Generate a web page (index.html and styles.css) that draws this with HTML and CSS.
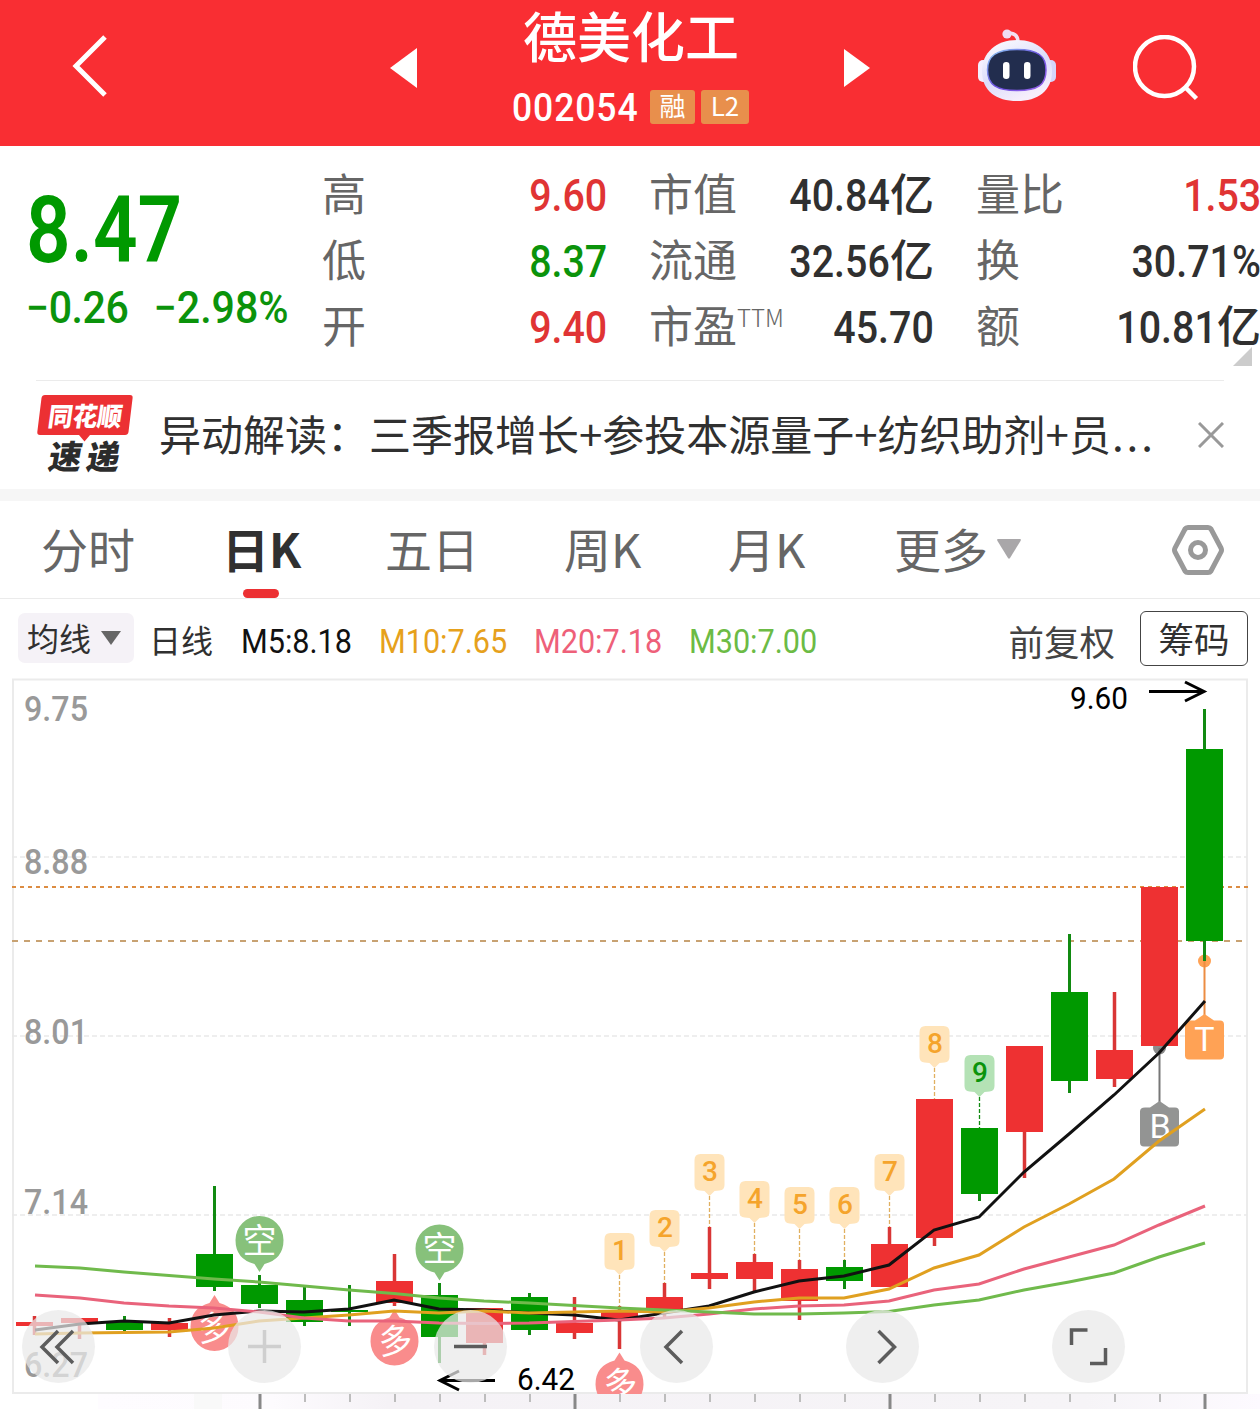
FILE: index.html
```html
<!DOCTYPE html>
<html lang="zh-CN">

<head>
    <meta charset="UTF-8">
    <meta name="viewport" content="width=device-width, initial-scale=1.0">
    <title>德美化工 002054</title>
    <link rel="stylesheet" href="styles.css">
</head>

<body>
    <header class="header">
        <svg class="back" width="36" height="64" viewBox="0 0 36 64">
            <path d="M33 4 L4 33 L33 62" />
        </svg>
        <svg class="prev" width="28" height="42" viewBox="0 0 28 42">
            <path d="M0 21 L27 1 V41 Z" />
        </svg>
        <div class="title">
            <h1>德美化工</h1>
            <div class="code-row">
                <span class="code">002054</span>
                <span class="badge">融</span>
                <span class="badge">L2</span>
            </div>
        </div>
        <svg class="next" width="26" height="40" viewBox="0 0 26 40">
            <path d="M0 1 L26 20 L0 39 Z" />
        </svg>
        <svg class="robot" width="78" height="74" viewBox="978 28 78 74">
            <defs>
                <linearGradient id="shell" x1="0" y1="0" x2="0.5" y2="1">
                    <stop offset="0" stop-color="#ffffff" />
                    <stop offset="0.6" stop-color="#dcdcfb" />
                    <stop offset="1" stop-color="#f6eefc" />
                </linearGradient>
                <linearGradient id="ring" x1="0" y1="0" x2="1" y2="1">
                    <stop offset="0" stop-color="#8fd0f5" />
                    <stop offset="0.5" stop-color="#6a50e0" />
                    <stop offset="1" stop-color="#9a63ea" />
                </linearGradient>
            </defs>
            <path d="M1008 33 Q1018 33 1018 42" fill="none" stroke="#f3dff0" stroke-width="3.5" />
            <circle cx="1007" cy="34" r="4.6" fill="#f0dcf3" />
            <rect x="978" y="60" width="12" height="22" rx="5" fill="#f3efff" />
            <rect x="1044" y="60" width="12" height="22" rx="5" fill="#d5d4fa" />
            <path d="M1017 40 C1038 40 1052 53 1052 71 C1052 91 1038 101 1017 101 C996 101 982 91 982 71 C982 53 996 40 1017 40 Z" fill="url(#shell)" />
            <path d="M1017 49.500 C1038 49.500 1046 56 1046 70 C1046 85 1038 90.500 1017 90.500 C997 90.500 987.500 85 987.500 70 C987.500 56 996 49.500 1017 49.500 Z" fill="#222d4e" stroke="url(#ring)" stroke-width="1.500" />
            <rect x="1003" y="62" width="6.500" height="17" rx="3.200" fill="#fff" />
            <rect x="1024" y="62" width="6.500" height="17" rx="3.200" fill="#fff" />
        </svg>
        <svg class="search" width="66" height="66" viewBox="0 0 66 66">
            <circle cx="31.500" cy="31.500" r="29.500" />
            <path d="M52 52 L63.500 63.500" />
        </svg>
    </header>

    <section class="quote">
        <div class="price">
            <div class="last num">8.47</div>
            <div class="change">
                <span class="num">−0.26</span>
                <span class="num">−2.98%</span>
            </div>
        </div>
        <dl class="metrics">
            <div><dt>高</dt><dd class="num red">9.60</dd></div>
            <div><dt>低</dt><dd class="num green">8.37</dd></div>
            <div><dt>开</dt><dd class="num red">9.40</dd></div>
        </dl>
        <dl class="metrics">
            <div><dt>市值</dt><dd><span class="num">40.84</span>亿</dd></div>
            <div><dt>流通</dt><dd><span class="num">32.56</span>亿</dd></div>
            <div><dt>市盈<sup>TTM</sup></dt><dd class="num">45.70</dd></div>
        </dl>
        <dl class="metrics">
            <div><dt>量比</dt><dd class="num red">1.53</dd></div>
            <div><dt>换</dt><dd class="num">30.71%</dd></div>
            <div><dt>额</dt><dd><span class="num">10.81</span>亿</dd></div>
        </dl>
        <i class="corner"></i>
    </section>

    <section class="news">
        <svg class="news-logo" width="98" height="82" viewBox="36 393 98 82">
            <path d="M45 395 H130 Q133 395 132.600 398 L128.500 432 Q128 435 125 435 H90 L84.500 441.500 L79 435 H40 Q37 435 37.300 432 L41.500 398 Q42 395 45 395 Z" fill="#ec3033" />
            <text class="logo-top" transform="translate(47 426) skewX(-8)" textLength="74" lengthAdjust="spacingAndGlyphs">同花顺</text>
            <text class="logo-bottom" transform="translate(47 469) skewX(-10)" textLength="71">速递</text>
        </svg>
        <p>异动解读：三季报增长+参投本源量子+纺织助剂+员<span class="dots">...</span></p>
        <svg class="close" width="26" height="26" viewBox="0 0 26 26">
            <path d="M1 1 L25 25 M25 1 L1 25" />
        </svg>
    </section>

    <nav class="tabs">
        <a>分时</a>
        <a class="active">日K</a>
        <a>五日</a>
        <a>周K</a>
        <a>月K</a>
        <a>更多</a>
        <svg class="more" width="24" height="20" viewBox="0 0 24 20">
            <path d="M1 0 H23 Q24.500 0 23.500 2 L13 19 Q12 20.500 11 19 L0.500 2 Q-0.500 0 1 0 Z" />
        </svg>
        <svg class="setting" width="52" height="50" viewBox="0 0 52 50">
            <path d="M16 2.500 H36 Q38 2.500 39 4 L49 23 Q50 25 49 27 L39 46 Q38 47.500 36 47.500 H16 Q14 47.500 13 46 L3 27 Q2 25 3 23 L13 4 Q14 2.500 16 2.500 Z" />
            <circle cx="26" cy="25" r="7.500" />
        </svg>
    </nav>

    <div class="legend">
        <button class="ma-btn">均线
            <svg width="20" height="14" viewBox="0 0 20 14"><path d="M0 0 H20 L10 14 Z" /></svg>
        </button>
        <span class="period">日线</span>
        <span class="ma m5">M5:8.18</span>
        <span class="ma m10">M10:7.65</span>
        <span class="ma m20">M20:7.18</span>
        <span class="ma m30">M30:7.00</span>
        <span class="adjust">前复权</span>
        <button class="chips">筹码</button>
    </div>

    <svg class="chart" width="1260" height="737" viewBox="0 672 1260 737">
        <defs>
            <path id="tag" d="M-9 0 H9 Q15 0 15 6 V31 Q15 36 10 36.500 L5 37 L0 42 L-5 37 L-10 36.500 Q-15 36 -15 31 V6 Q-15 0 -9 0 Z" />
            <path id="pin" d="M0 32 L-5 24 Q-24 19 -24 0 A24 24 0 0 1 24 0 Q24 19 5 24 Z" />
            <linearGradient id="strip">
                <stop offset="0" stop-color="#fefcff" />
                <stop offset="0.150" stop-color="#fdfbfe" />
                <stop offset="0.250" stop-color="#f5f2f6" />
                <stop offset="0.850" stop-color="#f6f4f7" />
                <stop offset="1" stop-color="#fdfaff" />
            </linearGradient>
            <clipPath id="plot"><rect x="12" y="679" width="1236" height="715" /></clipPath>
        </defs>

        <!-- time axis -->
        <rect x="98" y="1394" width="1162" height="15" fill="url(#strip)" />
        <rect x="194" y="1394" width="28" height="15" fill="#f9f9f9" />
        <path class="tick" d="M305 1394v8M350 1394v8M395 1394v8M440 1394v8M485 1394v8M530 1394v8M620 1394v8M665 1394v8M710 1394v8M755 1394v8M800 1394v8M845 1394v8M935 1394v8M980 1394v8M1025 1394v8M1070 1394v8M1115 1394v8M1160 1394v8" />
        <path class="tick-long" d="M260 1394v15M575 1394v15M890 1394v15M1205 1394v15" />

        <!-- frame and grid -->
        <rect class="frame" x="13" y="679.500" width="1234" height="713.500" />
        <path class="grid" d="M12 857H1247M12 1036H1247M12 1215H1247" />
        <g class="scale">
            <text x="24" y="721" textLength="64" lengthAdjust="spacingAndGlyphs">9.75</text>
            <text x="24" y="874" textLength="64" lengthAdjust="spacingAndGlyphs">8.88</text>
            <text x="24" y="1044" textLength="64" lengthAdjust="spacingAndGlyphs">8.01</text>
            <text x="24" y="1214" textLength="64" lengthAdjust="spacingAndGlyphs">7.14</text>
            <text x="24" y="1377" textLength="64" lengthAdjust="spacingAndGlyphs">6.27</text>
        </g>
        <path class="cost" d="M12 887H1248" />
        <path class="now" d="M12 941H1246" />

        <g clip-path="url(#plot)">
            <!-- long / short signals -->
            <g class="signal short">
                <use href="#pin" x="259.500" y="1240" />
                <text x="259.500" y="1253">空</text>
                <use href="#pin" x="439.500" y="1248.500" />
                <text x="439.500" y="1261">空</text>
            </g>
            <g class="signal long">
                <use href="#pin" transform="translate(214.500 1327) scale(1 -1)" />
                <text transform="translate(214.500 1340) rotate(-6 0 -12)">多</text>
                <use href="#pin" transform="translate(394.500 1341.500) scale(1 -1)" />
                <text transform="translate(395.500 1353) rotate(-6 0 -12)">多</text>
                <use href="#pin" transform="translate(619.500 1384.500) scale(1 -1)" />
                <text transform="translate(620.500 1396) rotate(-6 0 -12)">多</text>
            </g>
        </g>

        <!-- buy / trade marks -->
        <circle cx="1159.500" cy="1048" r="6.500" fill="#8c8c8c" />
        <path d="M1159.500 1048V1104" stroke="#777" stroke-width="2" />
        <path d="M1145 1107.500H1150L1159.500 1101L1169 1107.500H1175Q1179 1107.500 1179 1111.500V1142.500Q1179 1146.500 1175 1146.500H1144Q1140 1146.500 1140 1142.500V1111.500Q1140 1107.500 1145 1107.500Z" fill="#939493" />
        <text class="mark" x="1160" y="1137.500">B</text>
        <circle cx="1204.500" cy="961" r="6.500" fill="#ffa255" />
        <path d="M1204.500 961V1016" stroke="#ec8d43" stroke-width="2" />
        <path d="M1190 1020.500H1195L1204.500 1014L1214 1020.500H1220Q1224 1020.500 1224 1024.500V1055.500Q1224 1059.500 1220 1059.500H1189Q1185 1059.500 1185 1055.500V1024.500Q1185 1020.500 1190 1020.500Z" fill="#ffa255" />
        <text class="mark" x="1204.500" y="1050.500">T</text>

        <!-- candles: wick then body -->
        <g class="up">
            <path d="M34.500 1316V1335M79.500 1318V1339M169.500 1318V1337M394.500 1254V1306M484.500 1308V1355M574.500 1297V1339M619.500 1306V1349M664.500 1283V1317M709.500 1227V1289M754.500 1254V1291M799.500 1260V1320M889.500 1227V1287M934.500 1099V1246M1024.500 1046V1178M1114.500 992V1087" />
            <rect x="16" y="1322" width="37" height="4" />
            <rect x="61" y="1318" width="37" height="5" />
            <rect x="151" y="1323" width="37" height="7" />
            <rect x="376" y="1281" width="37" height="22" />
            <rect x="466" y="1308" width="37" height="35" />
            <rect x="556" y="1323" width="37" height="10" />
            <rect x="601" y="1311" width="37" height="9" />
            <rect x="646" y="1297" width="37" height="12" />
            <rect x="691" y="1273" width="37" height="6" />
            <rect x="736" y="1262" width="37" height="17" />
            <rect x="781" y="1269" width="37" height="32" />
            <rect x="871" y="1244" width="37" height="43" />
            <rect x="916" y="1099" width="37" height="139" />
            <rect x="1006" y="1046" width="37" height="86" />
            <rect x="1096" y="1050" width="37" height="29" />
            <rect x="1141" y="887" width="37" height="159" />
        </g>
        <g class="down">
            <path d="M124.500 1316V1331M214.500 1186V1291M259.500 1275V1308M304.500 1287V1326M349.500 1285V1326M439.500 1283V1363M529.500 1293V1335M844.500 1260V1289M979.500 1128V1201M1069.500 934V1093M1204.500 709V961" />
            <rect x="106" y="1322" width="37" height="8" />
            <rect x="196" y="1254" width="37" height="33" />
            <rect x="241" y="1285" width="37" height="19" />
            <rect x="286" y="1300" width="37" height="22" />
            <rect x="331" y="1310" width="37" height="2" />
            <rect x="421" y="1295" width="37" height="42" />
            <rect x="511" y="1297" width="37" height="33" />
            <rect x="826" y="1267" width="37" height="14" />
            <rect x="961" y="1128" width="37" height="66" />
            <rect x="1051" y="992" width="37" height="89" />
            <rect x="1186" y="749" width="37" height="192" />
        </g>

        <!-- nine-turn counts -->
        <path class="lead" d="M619.500 1275V1306M664.500 1252V1283M709.500 1196V1227M754.500 1223V1254M799.500 1229V1260M844.500 1229V1260M889.500 1196V1227M934.500 1068V1099" />
        <path class="lead last-lead" d="M979.500 1097V1128" />
        <g class="count">
            <use href="#tag" x="619.500" y="1233" />
            <use href="#tag" x="664.500" y="1210" />
            <use href="#tag" x="709.500" y="1154" />
            <use href="#tag" x="754.500" y="1181" />
            <use href="#tag" x="799.500" y="1187" />
            <use href="#tag" x="844.500" y="1187" />
            <use href="#tag" x="889.500" y="1154" />
            <use href="#tag" x="934.500" y="1026" />
            <use class="nine" href="#tag" x="979.500" y="1055" />
            <text x="620" y="1260">1</text>
            <text x="665" y="1237">2</text>
            <text x="710" y="1181">3</text>
            <text x="755" y="1208">4</text>
            <text x="800" y="1214">5</text>
            <text x="845" y="1214">6</text>
            <text x="890" y="1181">7</text>
            <text x="935" y="1053">8</text>
            <text class="nine-text" x="980" y="1082">9</text>
        </g>

        <!-- moving averages -->
        <polyline class="line l5" points="35,1330 80,1324 124,1321 169,1323 214,1315 259,1311 304,1312 349,1309 394,1300 439,1309 484,1310 529,1313 574,1315 619,1320 664,1313 709,1306 754,1292 799,1281 844,1276 889,1265 934,1230 979,1217 1024,1172 1069,1134 1114,1095 1159,1053 1205,1001" />
        <polyline class="line l10" points="35,1334 80,1333 124,1332.500 169,1332 214,1328 259,1321 304,1318 349,1315 394,1311 439,1313 484,1311 529,1313 574,1312 619,1311 664,1312 709,1308 754,1302 799,1298 844,1298 889,1289 934,1268 979,1255 1024,1227 1069,1204 1114,1179 1159,1141 1205,1109" />
        <polyline class="line l20" points="35,1295 80,1298 124,1303 169,1306 214,1308 259,1312 304,1318 349,1321 394,1321 439,1323 484,1323.500 529,1323 574,1321.500 619,1320 664,1318 709,1314 754,1309 799,1306 844,1305 889,1301 934,1290 979,1284 1024,1269 1069,1257 1114,1245 1159,1225 1205,1206" />
        <polyline class="line l30" points="35,1266 80,1268 124,1272 169,1275.500 214,1279 259,1282 304,1286 349,1290 394,1293.500 439,1298 484,1301 529,1303 574,1305.500 619,1308 664,1310 709,1312 754,1314 799,1314 844,1313 889,1311.500 934,1305 979,1300 1024,1290 1069,1282 1114,1273 1159,1257 1205,1243" />

        <!-- highest / lowest -->
        <g class="extreme">
            <text x="1070" y="709" textLength="58" lengthAdjust="spacingAndGlyphs">9.60</text>
            <path d="M1149 691.500H1203M1185 682L1204 691.500L1185 701" />
            <text x="517" y="1390" textLength="58" lengthAdjust="spacingAndGlyphs">6.42</text>
            <path d="M495 1380.500H441M459 1371L440 1380.500L459 1390" />
        </g>

        <!-- floating controls -->
        <g class="ctrl">
            <circle cx="58.500" cy="1346.500" r="36.500" />
            <path d="M58 1331L42 1347L58 1363M73 1331L57 1347L73 1363" />
            <circle cx="264.500" cy="1346.500" r="36.500" />
            <path class="off" d="M248 1346.500H281M264.500 1330V1363" />
            <circle cx="470.500" cy="1346.500" r="36.500" />
            <path d="M454 1346.500H487" />
            <circle cx="676.500" cy="1346.500" r="36.500" />
            <path d="M682 1331L666 1347L682 1363" />
            <circle cx="882.500" cy="1346.500" r="36.500" />
            <path d="M878.500 1331L894.500 1347L878.500 1363" />
            <circle cx="1088.500" cy="1346.500" r="36.500" />
            <path class="full" d="M1071.500 1345V1330H1087.500M1090 1363.500H1105.500V1348" />
        </g>
    </svg>
</body>

</html>
```

FILE: styles.css
```css
* {
    box-sizing: border-box;
}

body {
    width: 1260px;
    margin: 0;
    background: #fff;
    color: #303030;
    font-family: 'Noto Sans CJK SC', sans-serif;
    overflow-x: hidden;
}

h1, p, dl, dd {
    margin: 0;
}

svg {
    display: block;
    flex-shrink: 0;
}

button {
    border: none;
    padding: 0;
    font-family: inherit;
    color: inherit;
}

.num {
    font-family: Roboto, sans-serif;
    font-weight: 500;
    display: inline-block;
}

.red {
    color: #e03434;
}

.green {
    color: #0b930b;
}

/* header */
.header {
    display: flex;
    height: 146px;
    background: #f92e33;
    color: #fff;
}

.back {
    margin: 33px 0 0 72px;
    fill: none;
    stroke: #fff;
    stroke-width: 5;
}

.prev {
    margin: 47px 0 0 282px;
    fill: #fff;
}

.next {
    margin-top: 48px;
    fill: #fff;
}

.title {
    width: 426px;
    text-align: center;
}

.title h1 {
    font-size: 54px;
    font-weight: 500;
    line-height: 70px;
    height: 87px;
}

.code-row {
    display: flex;
    margin-left: 93px;
    height: 40px;
    align-items: center;
}

.code {
    width: 138px;
    font: 500 39px/42px Roboto, sans-serif;
    letter-spacing: 1px;
    text-align: left;
    transform: scaleX(0.91);
    transform-origin: left;
    margin-left: 1px;
    padding-top: 2px;
}

.badge {
    width: 45px;
    height: 34px;
    border-radius: 3px;
    background: #e88f4c;
    font-size: 26px;
    line-height: 30px;
}

.badge + .badge {
    width: 48px;
    margin-left: 6px;
}

.robot {
    margin: 28px 0 0 108px;
}

.search {
    margin: 35px 0 0 77px;
    fill: none;
    stroke: #fff;
    stroke-width: 4.5;
}

/* quote */
.quote {
    position: relative;
    display: flex;
    height: 234px;
    padding-top: 16px;
}

.price {
    width: 322px;
    padding-left: 26px;
    color: #009900;
}

.last {
    display: block;
    margin-top: 17px;
    font-size: 92px;
    font-weight: 600;
    line-height: 104px;
    transform: scaleX(0.85);
    transform-origin: left;
    white-space: nowrap;
}

.change {
    display: flex;
    gap: 27px;
    width: 300px;
    font-size: 44px;
    line-height: 50px;
    color: #0b930b;
    white-space: nowrap;
    transform: scaleX(0.935);
    transform-origin: left;
}

.change .num:first-child {
    letter-spacing: -0.5px;
}

.metrics {
    width: 285px;
    margin-right: 42px;
    font-size: 44px;
    line-height: 66px;
    flex-shrink: 0;
}

.metrics:nth-of-type(3) {
    margin-right: 0;
}

.metrics div {
    display: flex;
    justify-content: space-between;
    height: 66px;
    white-space: nowrap;
}

.metrics dt {
    margin-top: -3px;
    color: #666;
}

.metrics sup {
    position: relative;
    top: -16px;
    font-size: 24px;
    line-height: 0;
    vertical-align: baseline;
    font-weight: 300;
}

.metrics dd {
    margin-top: -3px;
    font-weight: 500;
}

.metrics .num {
    margin-top: 1px;
    font-size: 45px;
    transform: scaleX(0.875);
    transform-origin: right;
}

.corner {
    position: absolute;
    right: 8px;
    bottom: 14px;
    border-left: 19px solid transparent;
    border-bottom: 19px solid #ccc;
}

/* news */
.news {
    display: flex;
    align-items: center;
    height: 109px;
    margin: 0 36px;
    border-top: 1px solid #ebebeb;
}

.news-logo {
    margin-top: -2px;
    overflow: visible;
}

.logo-top {
    font-size: 26px;
    font-weight: 900;
    fill: #fff;
}

.logo-bottom {
    font-size: 33px;
    font-weight: 900;
    fill: #2c2c2c;
}

.news p {
    margin: -4px 0 0 25px;
    font-size: 42px;
    line-height: 60px;
    white-space: nowrap;
}

.dots {
    margin-left: 1px;
    letter-spacing: 3px;
}

.close {
    margin-left: auto;
    fill: none;
    stroke: #999;
    stroke-width: 3;
}

/* tabs */
.tabs {
    display: flex;
    height: 110px;
    border-top: 12px solid #f6f6f6;
    border-bottom: 1px solid #ebebeb;
    font-size: 47px;
    line-height: 93px;
    color: #666;
    padding-left: 41px;
}

.tabs a {
    position: relative;
    width: 94px;
    margin-right: 85px;
}

.tabs a:nth-child(2) {
    width: 80px;
    margin-left: 2px;
}

.tabs a:nth-child(3) {
    margin-left: -2px;
}

.tabs a:nth-child(4),
.tabs a:nth-child(5) {
    width: 79px;
}

.tabs a:nth-child(5) {
    margin-right: 87px;
}

.tabs a:nth-child(6) {
    margin-right: 9px;
}

.tabs .active {
    font-weight: 700;
    color: #303030;
}

.active::after {
    content: '';
    position: absolute;
    left: 21px;
    bottom: 0;
    width: 36px;
    height: 9px;
    border-radius: 5px;
    background: #ec3033;
}

.more {
    margin-top: 38px;
    fill: #a9a7a9;
}

.setting {
    margin: 24px 36px 0 auto;
    fill: none;
    stroke: #999;
    stroke-width: 5;
}

/* legend */
.legend {
    display: flex;
    height: 73px;
    padding: 12px 12px 0 18px;
    font-size: 32px;
    line-height: 60px;
    white-space: nowrap;
}

.ma-btn {
    display: flex;
    align-items: center;
    gap: 10px;
    width: 116px;
    height: 50px;
    margin-top: 2px;
    padding: 0 0 2px 9px;
    border-radius: 7px;
    background: #f5f2f7;
    font-size: 32px;
    line-height: 46px;
}

.ma-btn svg {
    margin-top: 2px;
    fill: #666;
}

.period {
    width: 92px;
    margin: -2px 0 0 15px;
}

.ma {
    width: 155px;
    font: 400 34px/60px Roboto, sans-serif;
    transform: scaleX(0.9);
    transform-origin: left;
}

.m5 {
    width: 138px;
    color: #111;
}

.m10 {
    color: #e6a11c;
}

.m20 {
    color: #ee6079;
}

.m30 {
    color: #6cbb45;
}

.adjust {
    margin-left: auto;
    margin-right: 25px;
    font-size: 35.5px;
    color: #444;
}

.chips {
    width: 108px;
    height: 55px;
    border: 1px solid #444;
    border-radius: 6px;
    background: #fff;
    font-size: 35.5px;
    line-height: 51px;
    padding-bottom: 2px;
}

/* chart */
.chart text {
    font-family: Roboto, 'Noto Sans CJK SC', sans-serif;
}

.frame {
    fill: none;
    stroke: #ebebeb;
    stroke-width: 2;
}

.grid {
    stroke: #e9e9e9;
    stroke-width: 1.5;
    stroke-dasharray: 5 3;
}

.cost {
    stroke: #dc8c42;
    stroke-width: 2;
    stroke-dasharray: 4 4;
}

.now {
    stroke: #c8a272;
    stroke-width: 2;
    stroke-dasharray: 6 6;
}

.tick {
    stroke: #bdbdbd;
    stroke-width: 2;
}

.tick-long {
    stroke: #888;
    stroke-width: 3;
}

.scale text {
    font-size: 35px;
    font-weight: 500;
    fill: #999;
}

.up {
    fill: #ee3132;
    stroke: none;
}

.up path {
    stroke: #d93636;
    stroke-width: 3.5;
}

.down {
    fill: #009900;
}

.down path {
    stroke: #118a11;
    stroke-width: 3;
}

.line {
    fill: none;
    stroke-width: 3;
}

.l5 {
    stroke: #111;
}

.l10 {
    stroke: #e0a020;
}

.l20 {
    stroke: #e9637b;
}

.l30 {
    stroke: #70ba4c;
}

.lead {
    stroke: #e0b060;
    stroke-width: 1.3;
    stroke-dasharray: 4 2;
}

.last-lead {
    stroke: #118a11;
}

.count {
    fill: #ffe4ba;
}

.count .nine {
    fill: #b4e2b5;
}

.count text {
    font-size: 28px;
    font-weight: 500;
    text-anchor: middle;
    fill: #f5a42c;
}

.count .nine-text {
    fill: #0b930b;
}

.signal text {
    font-size: 34px;
    text-anchor: middle;
    fill: #fff;
}

.short {
    fill: #87c17b;
}

.long {
    fill: #f98c8c;
}

.mark {
    font-size: 34px;
    text-anchor: middle;
    fill: #fff;
}

.extreme text {
    font-size: 31px;
    fill: #000;
}

.extreme path {
    fill: none;
    stroke: #000;
    stroke-width: 3;
}

.ctrl circle {
    fill: #e9e9e9;
    opacity: 0.72;
}

.ctrl path {
    fill: none;
    stroke: #5c5c5c;
    stroke-width: 3.5;
}

.ctrl .off {
    stroke: #cfcfcf;
}
```
